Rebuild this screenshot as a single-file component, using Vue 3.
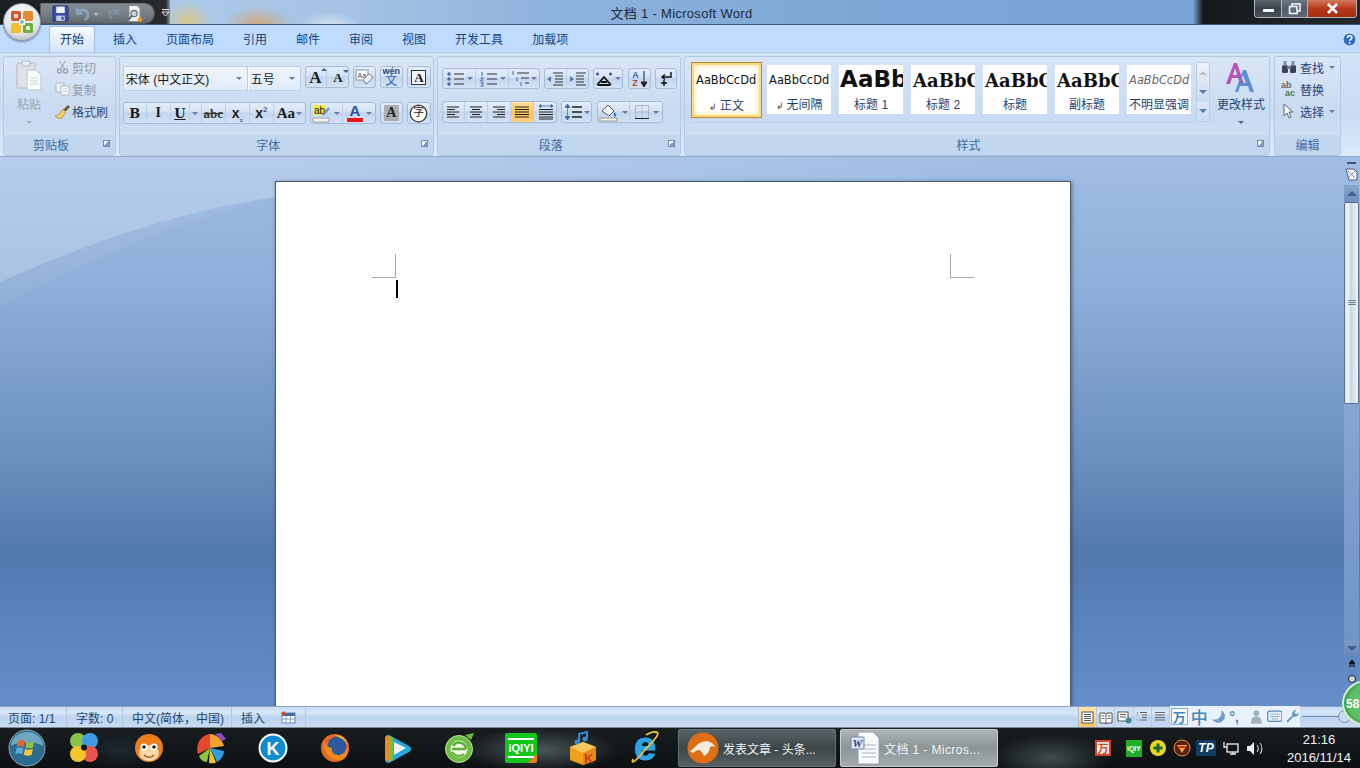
<script setup>
const tabs = ['插入', '页面布局', '引用', '邮件', '审阅', '视图', '开发工具', '加载项']
const alignIcons = [
  { d: 'M2 3h12M2 5.500h8M2 8h12M2 10.500h8M2 13h12', on: false },
  { d: 'M2 3h12M4 5.500h8M2 8h12M4 10.500h8M2 13h12', on: false },
  { d: 'M2 3h12M6 5.500h8M2 8h12M6 10.500h8M2 13h12', on: false },
  { d: 'M1 3h14M1 5.500h14M1 8h14M1 10.500h14M1 13h14', on: true },
  { d: 'M1 5.500h14M1 8h14M1 10.500h14M1 13h14M1 15h14', on: false, arrows: true }
]
const styles = [
  { name: '正文', mark: true, sample: 'AaBbCcDd', cls: 's-normal', active: true },
  { name: '无间隔', mark: true, sample: 'AaBbCcDd', cls: 's-normal' },
  { name: '标题 1', sample: 'AaBb', cls: 's-h1' },
  { name: '标题 2', sample: 'AaBbC', cls: 's-h2' },
  { name: '标题', sample: 'AaBbC', cls: 's-h2' },
  { name: '副标题', sample: 'AaBbC', cls: 's-h2' },
  { name: '不明显强调', sample: 'AaBbCcDd', cls: 's-em' }
]
</script>

<template>
  <div class="screen">
    <header class="titlebar">
      <div class="qat-zone">
        <div class="qat">
          <svg class="q1" width="17" height="17" viewBox="0 0 16 16"><rect x="1" y="1" width="14" height="14" rx="1" fill="#3b4fa8" stroke="#26327a"/><rect x="4" y="1.500" width="8" height="6" fill="#eef2fb"/><rect x="4" y="10" width="8" height="5" fill="#c4cbe0"/><rect x="9" y="11" width="2" height="3" fill="#3b4fa8"/></svg>
          <svg class="q2" width="17" height="17" viewBox="0 0 16 16"><path d="M3 3v5h5M3 8c2-4 8-5 10 0 1 3-1 5-3 6" fill="none" stroke="#8fb0cf" stroke-width="2.400"/></svg>
          <span class="q-caret q3"></span>
          <svg class="q4" width="15" height="17" viewBox="0 0 16 16"><path d="M13 3v5H8M13 8C11 4 5 3 4 8c-.6 3 1 5 3 6" fill="none" stroke="#7f9ab0" stroke-width="2.200"/></svg>
          <svg class="q5" width="18" height="19" viewBox="0 0 18 18"><path d="M3 1h8l3 3v13H3z" fill="#f4f4f2" stroke="#8b8b85"/><circle cx="8" cy="9" r="3.200" fill="#bcd5ea" stroke="#6b6b6b" stroke-width="1.200"/><path d="M5.500 11.500 3 15" stroke="#555" stroke-width="1.600"/><circle cx="14" cy="15" r="2.400" fill="#e69a2c"/></svg>
        </div>
        <svg class="qat-more" width="9" height="10" viewBox="0 0 9 10"><path d="M1 1.500h7" stroke="#e6edf5"/><path d="M1 4h7L4.500 8z" fill="none" stroke="#e6edf5"/></svg>
      </div>
      <div class="title">文档 1 - Microsoft Word</div>
      <div class="win-zone">
        <div class="winbtns">
          <div class="wb min"><span class="minbar"></span></div>
          <div class="wb res"><svg width="13" height="12" viewBox="0 0 13 12"><rect x="4" y="1" width="8" height="7" fill="none" stroke="#f2f6fa" stroke-width="1.600"/><rect x="1.500" y="3.500" width="7.500" height="7" fill="#5b6d80" stroke="#f2f6fa" stroke-width="1.600"/></svg></div>
          <div class="wb close"><svg width="13" height="11" viewBox="0 0 13 11"><path d="M2 1l9 9M11 1l-9 9" stroke="#fff" stroke-width="2.600"/></svg></div>
        </div>
      </div>
    </header>

    <div class="orb" aria-label="Office">
      <svg width="26" height="26" viewBox="0 0 26 26">
        <rect x="2" y="2" width="10" height="10" rx="1.500" fill="#d9562a"/>
        <rect x="14" y="2" width="10" height="10" rx="1.500" fill="#e98a2e"/>
        <rect x="2" y="14" width="10" height="10" rx="1.500" fill="#f2bf2f"/>
        <rect x="14" y="14" width="10" height="10" rx="1.500" fill="#6fae3d"/>
        <path d="M5 5h4v4H5zM17 17h4v4h-4z" fill="#fff" opacity=".75"/>
        <path d="M10 10h6v6h-6z" fill="#fff"/>
        <path d="M11.500 11.500h3v3h-3z" fill="#5fa4cf"/>
      </svg>
    </div>

    <nav class="tabs">
      <div class="tab active">开始</div>
      <div v-for="t in tabs" :key="t" class="tab">{{ t }}</div>
      <svg class="help" width="15" height="15" viewBox="0 0 15 15"><circle cx="7.500" cy="7.500" r="6.500" fill="#2f6fc0" stroke="#dfeaf8"/><path d="M5.300 6c0-3 4.600-3 4.600-.4 0 1.700-2.300 1.700-2.300 3.400" fill="none" stroke="#fff" stroke-width="1.500"/><circle cx="7.600" cy="11" r=".9" fill="#fff"/></svg>
    </nav>

    <section class="ribbon">
      <!-- clipboard -->
      <div class="group g-clip">
        <div class="g-body clip-body">
          <div class="paste">
            <svg width="26" height="32" viewBox="0 0 26 32"><rect x="1" y="3" width="18" height="25" rx="1.500" fill="#dfe3e8" stroke="#b4bcc7"/><rect x="6" y="1" width="8" height="5" rx="1" fill="#eef0f2" stroke="#aeb5bf"/><path d="M11 10h9l5 5v15H11z" fill="#f8f9fa" stroke="#bcc3cc"/><path d="M14 18h8M14 21h8M14 24h8" stroke="#cfd4da"/></svg>
            <span class="paste-t">粘贴</span>
            <span class="caret grey"></span>
          </div>
          <div class="clip-list">
            <div class="clip-row off"><svg width="14" height="14" viewBox="0 0 14 14"><circle cx="4" cy="11" r="2" fill="none" stroke="#9aa3ae" stroke-width="1.400"/><circle cx="10" cy="11" r="2" fill="none" stroke="#9aa3ae" stroke-width="1.400"/><path d="M5 9l5-8M9 9L4 1" stroke="#a9b1bb" stroke-width="1.300"/></svg><span>剪切</span></div>
            <div class="clip-row off"><svg width="15" height="14" viewBox="0 0 15 14"><rect x="1" y="1" width="8" height="9" fill="#eceff2" stroke="#b2bac4"/><rect x="6" y="4" width="8" height="9" fill="#f8f9fa" stroke="#b2bac4"/><path d="M8 7h4M8 9.500h4" stroke="#c3c9d0"/></svg><span>复制</span></div>
            <div class="clip-row"><svg width="17" height="15" viewBox="0 0 17 15"><path d="M9 6l5-5 2 2-5 5z" fill="#6a5a2c"/><path d="M9 5l3 3-4 6c-3 1-6 0-7-2 3 0 5-3 8-7z" fill="#efcf64" stroke="#a88a30" stroke-width=".7"/></svg><span>格式刷</span></div>
          </div>
        </div>
        <div class="g-label lb">剪贴板<i class="launch"></i></div>
      </div>

      <!-- font -->
      <div class="group g-font">
        <div class="g-body font-body">
          <div class="row r-top">
            <div class="combo">
              <div class="cb font-name"><span>宋体 (中文正文)</span><i class="caret"></i></div>
              <div class="cb font-size"><span>五号</span><i class="caret"></i></div>
            </div>
            <div class="bg h22 grow2">
              <div class="bb w22"><b class="glyph ser large">A<sup class="tiny-up"></sup></b></div>
              <div class="bb w22"><b class="glyph ser small">A<sup class="tiny-dn"></sup></b></div>
            </div>
            <div class="bg h22 w23"><svg width="19" height="17" viewBox="0 0 19 17"><rect x="1" y="1" width="12" height="10" fill="#fff" stroke="#8a8f98"/><text x="2.500" y="8.500" font-size="7" fill="#33456a" font-family="Liberation Sans">Aa</text><path d="M8 11l6-6 4 3-6 7z" fill="#f2f4f7" stroke="#7c8797"/><path d="M8 11l3 4" stroke="#7c8797"/></svg></div>
            <div class="bg h22 w23 wen"><span class="wen-top">wén</span><span class="wen-bot">文</span></div>
            <div class="bg h22 w24"><span class="boxa">A</span></div>
          </div>
          <div class="row r-bot">
            <div class="bg h22 w183">
              <div class="bb w23"><b class="glyph ser bold">B</b></div>
              <div class="bb w24"><i class="glyph ser italic">I</i></div>
              <div class="bb w19 und"><b class="glyph ser bold u">U</b></div>
              <div class="bb w12"><i class="caret"></i></div>
              <div class="bb w24"><b class="glyph ser strike">abc</b></div>
              <div class="bb w24"><b class="glyph lib">x<sub>₂</sub></b></div>
              <div class="bb w24"><b class="glyph lib">x<sup>2</sup></b></div>
              <div class="bb last"><b class="glyph ser aa">Aa</b><i class="caret c2"></i></div>
            </div>
            <div class="bg h22 w66 ml4">
              <div class="bb w33"><svg width="19" height="19" viewBox="0 0 19 19"><rect x="1" y="1" width="13" height="10" fill="#f5ee3c"/><text x="2" y="10" font-size="10" font-family="Liberation Sans" fill="#111">ab</text><path d="M11 11l6-7" stroke="#6b8fc5" stroke-width="2.500"/><rect x="1" y="14" width="16" height="4" fill="#f3f3ea" stroke="#9da3ab"/></svg><i class="caret c3"></i></div>
              <div class="bb w33 flat"><span class="font-a"><b>A</b><u></u></span><i class="caret c3"></i></div>
            </div>
            <div class="bg h22 w23 ml4"><span class="shade-a">A</span></div>
            <div class="bg h22 w24 ml4"><svg width="19" height="19" viewBox="0 0 19 19"><circle cx="9.500" cy="9.500" r="8.300" fill="#fff" stroke="#333" stroke-width="1.200"/></svg><span class="zi">字</span></div>
          </div>
        </div>
        <div class="g-label lb">字体<i class="launch"></i></div>
      </div>

      <!-- paragraph -->
      <div class="group g-para">
        <div class="g-body para-body">
          <div class="row p-top">
            <div class="bg p21 w98">
              <div class="bb w33"><svg width="18" height="16" viewBox="0 0 18 16"><path d="M8 3h10M8 8h10M8 13h10" stroke="#333" stroke-width="1.200"/><circle cx="3" cy="3" r="1.700" fill="#4a66a8"/><circle cx="3" cy="8" r="1.700" fill="#4a66a8"/><circle cx="3" cy="13" r="1.700" fill="#4a66a8"/></svg><i class="caret c3"></i></div>
              <div class="bb w33"><svg width="18" height="16" viewBox="0 0 18 16"><path d="M8 3h10M8 8h10M8 13h10" stroke="#333" stroke-width="1.200"/><path d="M3 1v4M1.500 7h3l-3 3h3M1.500 12h3l-1 1.500 1 1.500h-3" fill="none" stroke="#4a66a8"/></svg><i class="caret c3"></i></div>
              <div class="bb last"><svg width="19" height="16" viewBox="0 0 19 16"><path d="M6 2h12M10 7h8M14 12h4" stroke="#333" stroke-width="1.200"/><path d="M2 0v4M6 6v4M10 11v4" stroke="#4a66a8"/></svg><i class="caret c2"></i></div>
            </div>
            <div class="bg p21 w45 ml4">
              <div class="bb w22"><svg width="17" height="16" viewBox="0 0 17 16"><path d="M6 2h10M8 5h8M8 8h8M8 11h8M6 14h10" stroke="#333" stroke-width="1.200"/><path d="M0 8l4-3v6z" fill="#5577b5"/></svg></div>
              <div class="bb w22 flat"><svg width="17" height="16" viewBox="0 0 17 16"><path d="M1 2h10M1 5h8M1 8h8M1 11h8M1 14h10" stroke="#333" stroke-width="1.200" transform="translate(6)"/><path d="M5 8L1 5v6z" fill="#5577b5"/></svg></div>
            </div>
            <div class="bg p21 w30 ml4"><svg width="18" height="14" viewBox="0 0 18 14"><path d="M2 13L9 5l7 8M3 13h12M6 10h6" fill="none" stroke="#111" stroke-width="1.800"/><path d="M1 2l3 0M2.500.5v3M14 2h3M15.500.5v3" stroke="#2b4e96" stroke-width="1.300"/></svg><i class="caret c4"></i></div>
            <div class="bg p21 w23 ml5"><span class="az"><em>A</em><strong>Z</strong></span><svg width="8" height="18" viewBox="0 0 8 18"><path d="M4 1v13M1 12l3 5 3-5z" stroke="#222" fill="#222"/></svg></div>
            <div class="bg p21 w22 ml4"><svg width="14" height="15" viewBox="0 0 14 15"><path d="M12 1v5H4M6 3.500 3 6l3 2.500" fill="none" stroke="#111" stroke-width="1.400"/><path d="M5 9v6M2 12h6" stroke="#111" stroke-width="1.500"/></svg></div>
          </div>
          <div class="row p-bot">
            <div class="bg h22b w115">
              <div v-for="(a, i) in alignIcons" :key="i" class="bb w23" :class="{ on: a.on }">
                <svg width="16" height="16" viewBox="0 0 16 16"><path :d="a.d" stroke="#222" stroke-width="1.100"/><path v-if="a.arrows" d="M1 2h14M1 2l2-1.500v3zM15 2l-2-1.500v3z" stroke="#3a63a8" fill="#3a63a8" stroke-width=".8"/></svg>
              </div>
            </div>
            <div class="bg h22b w31 ml4"><svg width="18" height="18" viewBox="0 0 18 18"><path d="M3.500 2v14M1 4.500 3.500 1 6 4.500zM1 13.500 3.500 17 6 13.500z" fill="#3a63a8" stroke="#3a63a8" stroke-width=".7"/><path d="M8 4h10M8 9h10M8 14h10" stroke="#222" stroke-width="1.300"/></svg><i class="caret c4"></i></div>
            <div class="bg h22b w66 ml5">
              <div class="bb w33"><svg width="20" height="19" viewBox="0 0 20 19"><path d="M3 8l6-6 6 6-5 5z" fill="#f3f5f8" stroke="#555"/><path d="M15 9c2 2 3 3 2 4.500-1 .8-2.300 0-2-2z" fill="#3a7cc0"/><rect x="1" y="15" width="17" height="3" fill="#f3f3e8" stroke="#999"/></svg><i class="caret c3"></i></div>
              <div class="bb w33 flat"><svg width="16" height="16" viewBox="0 0 16 16"><rect x="1.500" y="1.500" width="13" height="13" fill="none" stroke="#8a8f96" stroke-dasharray="1 1"/><path d="M8 1.500v13M1.500 8h13" stroke="#a0a5ab" stroke-dasharray="1 1"/><path d="M1 14.500h14" stroke="#222"/></svg><i class="caret c3"></i></div>
            </div>
          </div>
        </div>
        <div class="g-label lb">段落<i class="launch"></i></div>
      </div>

      <!-- styles -->
      <div class="group g-styles">
        <div class="g-body styles-body">
          <div class="gallery">
            <div v-for="s in styles" :key="s.name" class="st" :class="{ active: s.active }">
              <div class="st-sample" :class="s.cls">{{ s.sample }}</div>
              <div class="st-name"><span v-if="s.mark" class="ret">↲</span>{{ s.name }}</div>
            </div>
          </div>
          <div class="gal-scroll">
            <div class="gs gs1"><i class="up"></i></div>
            <div class="gs"><i class="down"></i></div>
            <div class="gs gs3"><i class="more"></i></div>
          </div>
          <div class="change">
            <svg width="32" height="32" viewBox="0 0 32 32"><path d="M1 22 9 1h3l7 21h-4l-2-6H7l-2 6zM8 13h4l-2-7z" fill="#b653b5"/><path d="M10 30 18 8h3l8 22h-4l-2-6h-8l-2 6zm5-9h6l-3-8z" fill="#5b8ed6"/></svg>
            <span>更改样式</span>
            <i class="caret dark"></i>
          </div>
        </div>
        <div class="g-label lb">样式<i class="launch"></i></div>
      </div>

      <!-- editing -->
      <div class="group g-edit">
        <div class="g-body edit-body">
          <div class="edit-row"><svg width="16" height="14" viewBox="0 0 16 14"><rect x="1" y="5" width="6" height="8" rx="1.500" fill="#38435a"/><rect x="9" y="5" width="6" height="8" rx="1.500" fill="#38435a"/><rect x="2.500" y="1" width="3" height="5" fill="#7b8aa0"/><rect x="10.500" y="1" width="3" height="5" fill="#7b8aa0"/><rect x="6" y="6" width="4" height="3" fill="#6d7a90"/></svg><span>查找</span><i class="caret c5"></i></div>
          <div class="edit-row"><span class="abac"><em>ab</em><strong>ac</strong></span><span>替换</span></div>
          <div class="edit-row"><svg width="16" height="16" viewBox="0 0 16 16"><path d="M3 1v12l3-3 2 5 2-1-2-5h4z" fill="#f5f6f8" stroke="#5b6675"/></svg><span>选择</span><i class="caret c5"></i></div>
        </div>
        <div class="g-label">编辑</div>
      </div>
    </section>

    <main class="docarea">
      <svg class="swoosh" width="1343" height="160" viewBox="0 0 1343 160">
        <defs>
          <linearGradient id="sw" gradientUnits="userSpaceOnUse" x1="275" y1="0" x2="1071" y2="0"><stop offset="0" stop-color="#fff" stop-opacity=".24"/><stop offset="1" stop-color="#fff" stop-opacity="0"/></linearGradient>
        </defs>
        <path d="M0 0H1071V40H275C170 56 80 90 0 125z" fill="url(#sw)"/>
        <path d="M0 125C80 90 170 56 275 40 190 60 90 100 0 150z" fill="#fff" opacity=".06"/>
      </svg>
      <div class="canvas">
        <div class="page">
          <div class="marks"><span class="mark tl"></span><span class="mark tr"></span></div>
          <div class="cursor"></div>
        </div>
      </div>
      <aside class="vscroll">
        <span class="split"></span>
        <svg class="ruler-i" width="13" height="13" viewBox="0 0 13 13"><path d="M1 1h8l3 3v8H4z" fill="#eef2f7" stroke="#555f70"/><path d="M3 3l7 7M10 3l-7 7" stroke="#6d7788" stroke-dasharray="2 1"/></svg>
        <div class="sb-btn first"><i class="up2"></i></div>
        <div class="thumb"><span class="grip"></span></div>
        <div class="track"></div>
        <div class="sb-btn last"><i class="dn2"></i></div>
        <svg class="nav-a" width="8" height="9" viewBox="0 0 8 9"><path d="M4 1 1 5h6zM1 7h6" stroke="#111" fill="#111"/></svg>
        <span class="nav-dot"></span>
      </aside>
    </main>

    <footer class="status">
      <div class="st-cell c1">页面: 1/1</div>
      <div class="st-cell c2">字数: 0</div>
      <div class="st-cell c3">中文(简体，中国)</div>
      <div class="st-cell c4"><span>插入</span><svg width="15" height="13" viewBox="0 0 15 13"><rect x="1" y="2" width="13" height="10" fill="#f7f8fa" stroke="#6f88aa"/><rect x="1" y="2" width="13" height="3" fill="#3e6ea8"/><path d="M5 5v7M9.500 5v7M1 8h13" stroke="#8ea3bf"/><circle cx="2.500" cy="2.500" r="2" fill="#d34a34"/></svg></div>
      <div class="st-fill"></div>
      <div class="views">
        <div class="vw on"><svg width="13" height="13" viewBox="0 0 13 13"><rect x="1" y="1" width="11" height="11" fill="#fff" stroke="#555"/><path d="M3 3.500h7M3 5.500h7M3 7.500h7M3 9.500h7" stroke="#555"/></svg></div>
        <div class="vw"><svg width="14" height="13" viewBox="0 0 14 13"><path d="M1 2h5l1 1 1-1h5v10H8l-1 1-1-1H1z" fill="#fff" stroke="#555"/><path d="M7 3v9M2.500 5h3M2.500 7.500h3M8.500 5h3M8.500 7.500h3" stroke="#666"/></svg></div>
        <div class="vw"><svg width="15" height="13" viewBox="0 0 15 13"><rect x="1" y="1" width="10" height="9" fill="#fff" stroke="#555"/><path d="M3 3.500h6M3 6h6" stroke="#555"/><circle cx="11.500" cy="9.500" r="3" fill="#3f8a94"/></svg></div>
        <div class="vw"><svg width="12" height="12" viewBox="0 0 12 12"><path d="M4 1.500h7M6 4h5M6 6.500h5M4 9h7M1 1.500h1M1 4h1M1 9h1" stroke="#666"/></svg></div>
        <div class="vw"><svg width="12" height="12" viewBox="0 0 12 12"><path d="M1 1.500h10M1 4h10M1 6.500h10M1 9h10" stroke="#666"/></svg></div>
      </div>
      <div class="ime">
        <span class="ime-wan">万</span>
        <span class="ime-zh">中</span>
        <svg width="16" height="16" viewBox="0 0 16 16"><path d="M11 1a7 7 0 1 1-10 9c4 2 10 0 10-9z" fill="#6d9ccb"/></svg>
        <span class="ime-p">°,</span>
        <svg width="15" height="16" viewBox="0 0 15 16"><circle cx="7.500" cy="4" r="3" fill="#9fb0bf"/><path d="M2 15c0-6 2-7.500 5.500-7.500S13 9 13 15z" fill="#9fb0bf"/></svg>
        <svg width="16" height="13" viewBox="0 0 16 13"><rect x=".7" y="1" width="14.600" height="10.500" rx="2" fill="#eaf2fa" stroke="#5a8cb8" stroke-width="1.300"/><path d="M3 4h10M3 6.500h10M5 9h6" stroke="#5a8cb8" stroke-dasharray="1.500 .8"/></svg>
        <svg width="15" height="15" viewBox="0 0 15 15"><path d="M14 3.500a4 4 0 0 1-5.500 4L3 13.500 1.500 12l6-5.500A4 4 0 0 1 11.500 1L9.500 3.500l2 2z" fill="#5f93c2"/></svg>
      </div>
      <div class="zoom"><span class="zline"></span><span class="zminus"></span></div>
    </footer>

    <div class="badge"><span>58</span></div>

    <div class="taskbar">
      <div class="start">
        <svg width="38" height="38" viewBox="0 0 38 38">
          <circle cx="19" cy="19" r="18" fill="#2c6c8e" stroke="#8fa7b2"/>
          <path d="M3 17a16 14 0 0 1 32 0c-8-5-24-5-32 0z" fill="#8cc1d9" opacity=".7"/>
          <path d="M10 12c3-1.500 5-1 7 0l-1.200 6c-2-1-4-1.300-7-.2z" fill="#e6643a"/>
          <path d="M18.500 12.500c2.500 1.200 5 1.300 7.500 0L25 18.500c-2.500 1.300-5 1-7.500 0z" fill="#8fc24a"/>
          <path d="M8.500 19c3-1 5-.8 7 .2l-1.200 6c-2-1-4.200-1.200-7-.2z" fill="#5aa9dc"/>
          <path d="M17 19.800c2.500 1.200 5 1.300 7.800 0l-1 6c-2.800 1.300-5 1-8 0z" fill="#f3c63c"/>
        </svg>
      </div>
      <div class="tb-icons">
        <div class="ti"><svg width="32" height="32" viewBox="0 0 32 32"><circle cx="10" cy="9" r="8" fill="#8bc34a"/><circle cx="22" cy="9" r="8" fill="#3f9ae0"/><circle cx="22" cy="22" r="8" fill="#e9564f"/><circle cx="10" cy="22" r="8" fill="#f5c52c"/><circle cx="16" cy="15.500" r="3" fill="#10161a"/></svg></div>
        <div class="ti t2"><svg width="30" height="32" viewBox="0 0 30 32"><circle cx="15" cy="16" r="14" fill="#ec7d1c"/><ellipse cx="15" cy="21" rx="10" ry="8" fill="#fbd7a8"/><circle cx="10" cy="15" r="3.500" fill="#fff"/><circle cx="20" cy="15" r="3.500" fill="#fff"/><circle cx="10" cy="15" r="1.800" fill="#222"/><circle cx="20" cy="15" r="1.800" fill="#222"/><path d="M10 23c3 3 7 3 10 0" fill="none" stroke="#9a4b12" stroke-width="1.300"/></svg></div>
        <div class="ti"><svg width="32" height="32" viewBox="0 0 32 32"><path d="M15 16 3 22C0 12 6 3 15 2z" fill="#e8462f"/><path d="M15 16 4 24c1 3 4 6 8 6z" fill="#8cc63e"/><path d="M15 16l-1 15c2 .6 5 .4 7-.6z" fill="#f4c42b"/><path d="M15 16l7 14c4-2 7-7 7-11z" fill="#2f9de0"/><path d="M15 16 15 2c6 0 12 5 14 12z" fill="#f3a233"/><path d="M20 2l6-1 5 6-4 2z" fill="#8d4fc0"/></svg></div>
        <div class="ti"><svg width="30" height="30" viewBox="0 0 30 30"><circle cx="15" cy="15" r="13.500" fill="#0e8cd2" stroke="#fff" stroke-width="2"/><text x="15" y="21.500" text-anchor="middle" font-family="Liberation Sans" font-weight="700" font-size="18" fill="#fff">K</text></svg></div>
        <div class="ti"><svg width="30" height="30" viewBox="0 0 30 30"><circle cx="15" cy="15" r="14" fill="#e9681f"/><circle cx="17" cy="13" r="9.500" fill="#2d5a9e"/><path d="M3 8c0 11 7 20 18 19 5-1 8-7 7-14-2 8-6 10-11 9-4-1-6-4-5-7-3 0-6-2-9-7z" fill="#f08a1c"/><path d="M14 2c6 0 12 3 14 10-3-5-7-7-14-10z" fill="#f6bf2c"/></svg></div>
        <div class="ti"><svg width="32" height="32" viewBox="0 0 32 32"><path d="M4 7c0-4 3-5 6-3l18 10c3 2 3 4 0 6L10 30c-3 2-6 1-6-3z" fill="#23a8e0"/><path d="M4 7c0-3 2-4 5-3v25c-3 1-5-.5-5-3z" fill="#f08a24"/><path d="M9 4l3 2v22l-3 2z" fill="#7ac142"/><path d="M13 10l12 6-12 7z" fill="#f1f4f0"/></svg></div>
        <div class="ti"><svg width="30" height="32" viewBox="0 0 30 32"><circle cx="15" cy="17" r="13.500" fill="#6fbe44" stroke="#bfe39f"/><circle cx="15" cy="17" r="8.500" fill="#f1f7e9"/><path d="M8 17h14M22 17a7 7 0 0 0-13-3" fill="none" stroke="#5cae36" stroke-width="2.500"/><path d="M8 20a8 8 0 0 0 12 2" fill="none" stroke="#5cae36" stroke-width="2.200"/><path d="M21 3l9-2-3 7z" fill="#6fbe44"/></svg></div>
        <div class="ti"><div class="iqiyi"><span>iQIYI</span></div></div>
        <div class="ti"><svg width="32" height="34" viewBox="0 0 32 34"><path d="M3 16l13-5 13 5v13l-13 5-13-5z" fill="#efa11e"/><path d="M16 11l13 5-13 6-13-6z" fill="#f7c75b"/><path d="M16 22v12l13-5V16z" fill="#e5881a"/><text x="17" y="32" font-family="Liberation Sans" font-weight="700" font-size="13" fill="#cf3a19">K</text><path d="M12 11V3l8-2v7" fill="none" stroke="#3c89c9" stroke-width="2"/><circle cx="10" cy="11" r="2.500" fill="#3c89c9"/><circle cx="18" cy="8" r="2.500" fill="#3c89c9"/></svg></div>
        <div class="ti"><svg width="34" height="34" viewBox="0 0 34 34"><text x="17" y="29" text-anchor="middle" font-family="Liberation Sans" font-weight="700" font-size="40" fill="#2da4e0" stroke="#2da4e0" stroke-width="1">e</text><path d="M5 28C2 35 10 28 16 20 24 11 34 2 28 1c-3-.5-7 1-10 3" fill="none" stroke="#f0c13a" stroke-width="1.800"/></svg></div>
      </div>
      <div class="task t-a">
        <svg width="32" height="32" viewBox="0 0 32 32"><circle cx="16" cy="16" r="15.500" fill="#e06f14"/><path d="M3 19c5-2 6-7 12-9 5-2 11 0 13 5-2-1-4-1-5 0 0 3-2 7-6 9-1-3-3-4-4-6-3 0-5 1-7 3z" fill="#f5ede2"/></svg>
        <span>发表文章 - 头条...</span>
      </div>
      <div class="task t-b">
        <svg width="30" height="34" viewBox="0 0 30 34"><path d="M8 1h15l6 6v26H8z" fill="#f7f9fb" stroke="#93a2b5"/><path d="M12 14h14M12 18h14M12 22h14M12 26h14" stroke="#aab6c5"/><rect x="1" y="6" width="13" height="12" rx="1" fill="#dbe6f4" stroke="#6d86ad"/><text x="7.500" y="15.500" text-anchor="middle" font-family="Liberation Serif" font-style="italic" font-weight="700" font-size="11" fill="#25408f">W</text></svg>
        <span>文档 1 - Micros...</span>
      </div>
      <div class="tray">
        <div class="ty ty1"><span>万</span></div>
        <div class="ty"><div class="ty-iq">iQIY</div></div>
        <div class="ty"><svg width="18" height="18" viewBox="0 0 18 18"><circle cx="9" cy="9" r="8" fill="#e6d72a"/><path d="M9 4.500v9M4.500 9h9" stroke="#1d6b2a" stroke-width="3"/></svg></div>
        <div class="ty"><svg width="18" height="18" viewBox="0 0 18 18"><circle cx="9" cy="9" r="8" fill="#5c1e12" stroke="#d5963a"/><path d="M4 6h10L9 14z" fill="#e8a52c"/><path d="M6 8h6" stroke="#c92a18" stroke-width="2"/></svg></div>
        <div class="ty"><span class="tp">TP</span></div>
        <div class="ty"><svg width="17" height="17" viewBox="0 0 17 17"><rect x="5" y="4" width="11" height="8" fill="none" stroke="#f1f3f4" stroke-width="1.300"/><path d="M2 2v5h3M8 14h6M11 12v2" stroke="#f1f3f4" stroke-width="1.300"/></svg></div>
        <div class="ty"><svg width="17" height="15" viewBox="0 0 17 15"><path d="M1 5h3l4-4v13l-4-4H1z" fill="#eef1f3"/><path d="M11 4c1.500 2 1.500 5 0 7M14 2c2.500 3 2.500 8 0 11" fill="none" stroke="#c8ced2" stroke-width="1.100"/></svg></div>
        <div class="clock"><div>21:16</div><div>2016/11/14</div></div>
        <div class="showdesk"></div>
      </div>
    </div>
  </div>
</template>

<style>
html, body { margin: 0; background: #10161a; }
</style>

<style scoped>
* { box-sizing: border-box; }
.screen { position: relative; width: 1360px; height: 768px; overflow: hidden; display: flex; flex-direction: column; font-family: "Liberation Sans", "Noto Sans CJK SC", sans-serif; font-size: 12px; color: #20406c; }

/* title */
.titlebar { height: 25px; flex: none; display: flex; border-bottom: 1px solid #3c5677;
  background:
    radial-gradient(ellipse 24px 18px at 188px 20px, #d8c98e 0, transparent 100%),
    radial-gradient(ellipse 34px 18px at 258px 24px, #cfa97f 0, transparent 100%),
    radial-gradient(ellipse 30px 14px at 330px 26px, #d9e4ee 0, transparent 100%),
    linear-gradient(90deg, #aac8e8 170px, #a4c3e4 350px, #8db2dc 560px, #7ba5d6 900px, #7aa4d5 1190px); }
.qat-zone { width: 170px; height: 24px; flex: none; position: relative; padding-left: 40px; background: linear-gradient(90deg, #1b1f22 0, #26282a 155px, #2b2d2e 166px, rgba(40,44,48,0) 172px); }
.qat { width: 115px; height: 21px; margin-top: 3px; border-radius: 0 11px 11px 0 / 0 11px 11px 0; background: linear-gradient(#828a92, #777f86 55%, #5f666c); border: 1px solid #555b60; border-top-color: #6e7479; display: flex; align-items: center; position: relative; }
.q1 { margin-left: 11px; }
.q2 { margin-left: 5px; opacity: .75; }
.q-caret { width: 0; height: 0; border: 3px solid transparent; border-top-color: #a9b9c6; margin: 4px 0 0 2px; }
.q4 { margin-left: 7px; opacity: .7; }
.q5 { margin-left: 5px; }
.qat-more { position: absolute; left: 161px; top: 8px; }
.title { flex: 1; text-align: center; font-size: 13px; line-height: 27px; color: #202a3a; letter-spacing: .3px; }
.win-zone { width: 167px; flex: none; height: 24px; padding-left: 61px; background: linear-gradient(90deg, rgba(20,24,28,0) 0, #16191c 10px, #1b1e21 60px, #24282b); }
.winbtns { display: flex; height: 18px; width: 103px; border: 1px solid #aeb6bd; border-top: 0; border-radius: 0 0 4px 4px; overflow: hidden; }
.wb { height: 100%; display: flex; align-items: center; justify-content: center; border-right: 1px solid #aeb6bd; }
.min { width: 27px; background: linear-gradient(#5c6670, #3a4149 50%, #4a525a); }
.minbar { width: 11px; height: 3px; background: #f5f7f9; margin-top: 4px; }
.res { width: 26px; background: linear-gradient(#6b7986, #4f5a65 50%, #5d6975); }
.close { flex: 1; border: 0; background: linear-gradient(#d47a5e, #b8381a 50%, #a52e14); }
.orb { position: absolute; left: 3px; top: 3px; width: 38px; height: 38px; border-radius: 50%; display: flex; align-items: center; justify-content: center; background: radial-gradient(circle at 50% 30%, #fbfcfd, #dfe5ea 60%, #a4abb3); border: 1px solid #8d96a0; box-shadow: 0 1px 2px rgba(30,40,60,.5); z-index: 3; }

/* tabs */
.tabs { height: 27px; flex: none; background: #bfdbff; display: flex; align-items: flex-end; padding-left: 49px; position: relative; }
.tab { height: 26px; line-height: 28px; padding: 0 14.5px; color: #16467f; white-space: nowrap; }
.tab.active { padding: 0 10px; margin-right: 3.5px; height: 26px; color: #16365f; background: linear-gradient(#fbfdff, #e6f0fc 40%, #d4e4f8); border: 1px solid #a3bcdd; border-bottom: 0; border-radius: 3px 3px 0 0; line-height: 26px; }
.help { position: absolute; left: 1342px; top: 7px; }

/* ribbon */
.ribbon { height: 105px; flex: none; display: flex; gap: 3px; padding: 3px 19px 1px 3px; background: linear-gradient(#d2e3f8, #c9dbf3 60%, #dcebfb); border-top: 1px solid #b3cbe6; border-bottom: 1px solid #91a9c6; }
.group { height: 100px; display: flex; flex-direction: column; border: 1px solid #b2c9e3; border-radius: 3px; background: linear-gradient(#d9e6f6, #c7d9f0 62%, #d6e5f7); }
.g-clip { width: 113px; }
.g-font { width: 316px; }
.g-para { width: 244px; }
.g-styles { width: 586px; }
.g-edit { width: 67px; margin-left: 1px; }
.g-body { flex: 1; min-height: 0; }
.g-label { height: 20px; flex: none; position: relative; text-align: center; line-height: 22px; color: #3f6c9f; background: #c0d7ef; border-radius: 0 0 3px 3px; }
.g-label.lb { padding-right: 17px; }
.launch { position: absolute; right: 5px; top: 5px; width: 7px; height: 7px; border: 1px solid #6f8db0; background: linear-gradient(135deg, #fff 50%, #7e9cc0 50%); }
.caret { display: inline-block; width: 0; height: 0; border: 3px solid transparent; border-top: 3px solid #6a7f9b; border-bottom: 0; flex: none; }
.caret.grey { border-top-color: #a6b0bc; }
.caret.dark { border-top-color: #4f6a8c; }
.c2 { margin-left: 1px; }
.c3 { margin-left: 3px; }
.c4 { margin-left: 2px; }
.c5 { margin-left: 2px; }

.clip-body { display: flex; padding: 3px 0 0 1px; }
.paste { width: 48px; display: flex; flex-direction: column; align-items: center; }
.paste-t { color: #9ba4af; margin-top: 5px; line-height: 16px; }
.paste .caret { margin-top: 8px; }
.clip-list { display: flex; flex-direction: column; margin: -4px 0 0 1px; }
.clip-row { height: 22px; display: flex; align-items: center; gap: 1px; white-space: nowrap; color: #2c4a75; }
.clip-row svg { width: 17px; flex: none; }
.clip-row.off { color: #8e99a7; }

.font-body { padding: 9px 0 0 3px; }
.para-body { padding: 11px 0 0 4px; }
.row { display: flex; gap: 4px; align-items: flex-start; }
.r-bot { margin-top: 11px; gap: 0; }
.p-bot { margin-top: 12px; gap: 0; }
.p-top { gap: 0; }
.combo { display: flex; height: 25px; }
.cb { height: 25px; border: 1px solid #bccfe6; background: linear-gradient(#eef4fc, #e1ebf8); display: flex; align-items: center; justify-content: space-between; padding: 0 5px 0 2px; color: #1a1a1a; font-size: 12px; }
.font-name { width: 125px; }
.font-size { width: 53px; border-left-color: #fff; }
.bg { display: flex; align-items: center; justify-content: center; border: 1px solid #a5bdda; border-radius: 3px; background: linear-gradient(#e3edfa, #d3e2f5 45%, #c3d6ee 50%, #d3e2f4); flex: none; overflow: hidden; position: relative; }
.h22 { height: 22px; }
.h22b { height: 22px; }
.p21 { height: 21px; }
.bb { height: 100%; display: flex; align-items: center; justify-content: center; border-right: 1px solid #bccfe5; flex: none; }
.bb.flat, .bb.last, .bb:last-child { border-right: 0; }
.bb.last { flex: 1; }
.bb.on { background: linear-gradient(#ffe39f, #ffc25e 50%, #ffd27c); }
.w12 { width: 12px; } .w19 { width: 19px; } .w22 { width: 22px; } .w23 { width: 23px; } .w24 { width: 24px; } .w30 { width: 30px; } .w31 { width: 31px; } .w33 { width: 33px; } .w45 { width: 45px; } .w66 { width: 66px; } .w98 { width: 98px; } .w115 { width: 115px; } .w183 { width: 183px; }
.ml4 { margin-left: 4px; } .ml5 { margin-left: 5px; }
.grow2 { width: 44px; }
.glyph { color: #1c1c1c; font-style: normal; line-height: 1; }
.ser { font-family: "Liberation Serif", serif; }
.lib { font-family: "Liberation Sans", sans-serif; font-size: 14px; }
.lib sub, .lib sup { font-size: 8px; color: #4a5f7a; line-height: 0; }
.large { font-size: 17px; position: relative; }
.small { font-size: 13px; position: relative; }
.tiny-up, .tiny-dn { position: absolute; right: -6px; top: -1px; border: 3px solid transparent; }
.tiny-up { border-bottom: 3px solid #3a5f8c; border-top: 0; }
.tiny-dn { border-top: 3px solid #3a5f8c; border-bottom: 0; }
.bold { font-family: "DejaVu Serif", serif; font-size: 13px; }
.italic { font-size: 14px; font-weight: 700; }
.u { text-decoration: underline; }
.strike { font-size: 13px; text-decoration: line-through; font-weight: 700; color: #333; }
.aa { font-size: 15px; }
.wen { flex-direction: column; line-height: 1; }
.wen-top { font-size: 9px; font-weight: 700; color: #28497d; line-height: 8px; }
.wen-bot { font-size: 12px; color: #2f5fc0; line-height: 12px; }
.boxa { width: 15px; height: 15px; border: 1px solid #333; font: 700 13px/14px "Liberation Serif", serif; color: #111; text-align: center; background: #f1f5fb; }
.font-a { display: inline-flex; flex-direction: column; align-items: center; }
.font-a b { font: 700 15px/12px "Liberation Sans", sans-serif; color: #2d4f9e; }
.font-a u { width: 16px; height: 4px; background: #e8141c; display: block; margin-top: 1px; }
.shade-a { width: 15px; height: 16px; background: #a9aeb3; color: #222; font: 700 14px/16px "Liberation Serif", serif; text-align: center; }
.zi { position: absolute; left: 0; right: 0; top: 2px; text-align: center; color: #222; font-size: 11px; line-height: 15px; }
.az { display: inline-flex; flex-direction: column; font: 700 9px/8px "Liberation Sans", sans-serif; margin-right: 1px; }
.az em { font-style: normal; color: #3b67b0; }
.az strong { color: #b8413b; }

.styles-body { display: flex; padding: 6px 0 0 6px; }
.gallery { display: flex; width: 504px; height: 60px; gap: 4px; border-bottom: 1px solid #bed0e8; background: linear-gradient(#d4e3f6, #c8daf2); }
.st { width: 64px; height: 49px; margin-top: 2px; margin-left: 4px; background: #fff; flex: none; overflow: hidden; text-align: center; }
.st:nth-child(2) { margin-left: 1px; }
.st.active { width: 71px; height: 56px; margin: -1px 0 0; padding-top: 2px; border: 1px solid #b98a3a; box-shadow: inset 0 0 0 2px #ffd877, inset 0 0 5px 3px #ffe9b0; }
.st-sample { height: 31px; line-height: 30px; white-space: nowrap; overflow: hidden; color: #111; padding-left: 2px; text-align: left; }
.st.active .st-sample { padding-left: 4px; height: 32px; }
.s-normal { font: 11.4px/30px "DejaVu Sans", sans-serif; }
.s-h1 { font: 700 23px/28px "DejaVu Sans", sans-serif; padding-left: 1px; }
.s-h2 { font: 700 18px/31px "DejaVu Serif", serif; }
.s-em { font: italic 11.4px/30px "DejaVu Sans", sans-serif; color: #666; }
.st-name { height: 18px; line-height: 18px; color: #1e3f74; white-space: nowrap; font-size: 12px; }
.ret { font-size: 9px; margin-right: 3px; color: #444; }
.gal-scroll { width: 14px; margin-left: 1px; height: 60px; border: 1px solid #b9cde6; border-radius: 2px; display: flex; flex-direction: column; margin-top: -1px; }
.gs { flex: 1; display: flex; align-items: center; justify-content: center; background: linear-gradient(#dbe8f8, #c8dbf3); }
.gs1 { background: linear-gradient(#f0f4f9, #dfe6ef); }
.gs i { width: 0; height: 0; border: 4px solid transparent; }
.up { border-bottom: 4px solid #b6c3d1 !important; border-top: 0 !important; }
.down { border-top: 4px solid #5c7da4 !important; border-bottom: 0 !important; }
.more { border-top: 4px solid #5c7da4 !important; border-bottom: 0 !important; }
.change { width: 56px; display: flex; flex-direction: column; align-items: center; color: #21467c; white-space: nowrap; margin: -1px 0 0 3px; }
.change span { margin-top: 3px; line-height: 16px; }
.change .caret { margin-top: 8px; }
.edit-body { padding: 0 0 0 6px; }
.edit-row { height: 22px; display: flex; align-items: center; gap: 3px; color: #1f4379; white-space: nowrap; }
.edit-row:first-child { margin-top: -1px; }
.edit-row svg { flex: none; }
.abac { display: inline-flex; flex-direction: column; width: 16px; font: 700 9px/8px "Liberation Sans", sans-serif; }
.abac em { font-style: normal; color: #666; }
.abac strong { color: #3d7d4d; padding-left: 4px; }

/* doc */
.docarea { flex: 1; min-height: 0; display: flex; position: relative; overflow: hidden; background: linear-gradient(#9fbde6 0, #8eafd9 130px, #7fa2cf 200px, #6b8fbf 300px, #5279ae 395px, #658fcb 550px); }
.swoosh { position: absolute; left: 0; top: 0; }
.canvas { width: 1343px; flex: none; position: relative; padding: 24px 0 0 275px; }
.page { width: 796px; height: 560px; background: #fff; border: 1px solid #4d5b6b; box-shadow: 1px 1px 4px rgba(40,60,90,.6); padding: 72px 96px; }
.marks { display: flex; justify-content: space-between; }
.mark { width: 24px; height: 24px; border: 0 solid #a8a8a8; }
.tl { border-right-width: 1px; border-bottom-width: 1px; }
.tr { border-left-width: 1px; border-bottom-width: 1px; }
.cursor { width: 2px; height: 18px; background: #000; margin: 2px 0 0 24px; }
.vscroll { width: 17px; flex: none; display: flex; flex-direction: column; align-items: center; position: relative; }
.split { width: 9px; height: 2px; background: #3f587c; margin-top: 5px; flex: none; }
.ruler-i { margin-top: 4px; flex: none; }
.sb-btn { width: 15px; height: 16px; display: flex; align-items: center; justify-content: center; background: linear-gradient(#89a7cc, #6e90bc); flex: none; }
.sb-btn.first { margin-top: 4px; height: 17px; }
.up2 { border: 5px solid transparent; border-bottom: 5px solid #3f5f88; border-top: 0; }
.dn2 { border: 5px solid transparent; border-top: 5px solid #3f5f88; border-bottom: 0; }
.thumb { width: 15px; height: 202px; flex: none; background: linear-gradient(90deg, #dfe7f2, #f0f4fa 25%, #c9d5e5 45%, #dbe3ee 70%, #f2f5fa); border: 1px solid #5a6f8c; border-radius: 2px; display: flex; align-items: center; justify-content: center; }
.grip { width: 8px; height: 6px; background: repeating-linear-gradient(#6c7f98 0, #6c7f98 1px, transparent 1px, transparent 2px); }
.track { width: 15px; height: 236px; flex: none; background: linear-gradient(#86a6d2, #6f94c6); }
.sb-btn.last { height: 16px; background: linear-gradient(#7b9ac4, #668abb); }
.nav-a { margin-top: 3px; flex: none; }
.nav-dot { width: 8px; height: 8px; border-radius: 50%; border: 1px solid #222; background: #cfd4dc; margin-top: 7px; flex: none; }
.badge { position: absolute; left: 1342px; top: 680px; width: 50px; height: 46px; border-radius: 50%; background: radial-gradient(circle at 50% 50%, #63c16b 0, #5dbd69 58%, #35a53e 72%); border: 2px solid #d2ecd3; z-index: 2; color: #fff; font: 700 12px/44px "Liberation Sans", sans-serif; padding-left: 2px; }

/* status */
.status { height: 21px; flex: none; display: flex; align-items: stretch; position: relative; background: linear-gradient(#c9dcf6, #d7e5f8 30%, #bcd2ef 55%, #cadcf3); border-top: 1px solid #8ea3bf; color: #24466f; font-size: 12px; }
.st-cell { display: flex; align-items: center; padding-left: 8px; border-right: 1px solid #b4c8e1; white-space: nowrap; }
.c1 { width: 67px; }
.st-cell.c2 { width: 56px; padding-left: 9px; margin: 0; }
.st-cell.c3 { width: 109px; padding-left: 9px; margin: 0; }
.st-cell.c4 { width: 74px; padding-left: 9px; gap: 16px; margin: 0; }
.st-fill { width: 773px; flex: none; border-right: 1px solid #a6bcd8; }
.views { width: 91px; flex: none; display: flex; }
.vw { flex: 1; display: flex; align-items: center; justify-content: center; border-right: 1px solid #b7cae2; }
.vw.on { background: linear-gradient(#ffe6a6, #ffc764); }
.ime { width: 130px; flex: none; height: 21px; margin-top: -1px; background: #e9f2fc; display: flex; align-items: center; gap: 3px; }
.ime-wan { width: 17px; height: 17px; margin-left: 1px; border: 1px solid #7eaed8; background: #f8fbff; color: #3f86bf; font: 700 13px/15px "Noto Sans CJK SC", sans-serif; text-align: center; }
.ime-zh { color: #4a85b8; font: 500 17px/18px "Noto Sans CJK SC", sans-serif; }
.ime-p { color: #4a85b8; font: 700 14px/14px "Liberation Sans", sans-serif; width: 17px; }
.zoom { flex: 1; position: relative; }
.zline { position: absolute; left: 2px; right: 14px; top: 9px; height: 1px; background: #6e8cb0; }
.zminus { position: absolute; left: 38px; top: 3px; width: 13px; height: 13px; border-radius: 50%; border: 1px solid #768cab; background: #c9d9ec; }

/* taskbar */
.taskbar { height: 41px; flex: none; display: flex; align-items: center; border-top: 1px solid #7e8a94; color: #eef2f4; background:
    radial-gradient(ellipse 60px 24px at 1050px 30px, #3f4b4a 0, transparent 100%),
    radial-gradient(ellipse 80px 22px at 540px 22px, #4a5658 0, transparent 100%),
    radial-gradient(ellipse 40px 20px at 120px 22px, #1d2830 0, transparent 100%),
    linear-gradient(#181d20, #0c1013); }
.start { width: 53px; flex: none; padding-left: 8px; display: flex; align-items: center; }
.tb-icons { display: flex; width: 623px; flex: none; }
.ti { width: 62px; height: 38px; flex: none; display: flex; align-items: center; justify-content: center; }
.t2 { margin-left: 3px; }
.iqiyi { width: 32px; height: 30px; background: linear-gradient(135deg, #13c71a 85%, #ed7d23 85%); border-radius: 2px; display: flex; align-items: center; justify-content: center; }
.iqiyi span { color: #fff; font: 700 11px/16px "Liberation Sans", sans-serif; border: 2px solid #fff; border-left-width: 0; border-right-width: 0; }
.task { height: 38px; flex: none; width: 158px; margin-left: 2px; display: flex; align-items: center; gap: 4px; padding-left: 8px; border: 1px solid #66727a; border-radius: 2px; background: linear-gradient(#596468, #3c4649 50%, #566064); font-size: 12px; color: #f1f4f5; white-space: nowrap; overflow: hidden; }
.t-b { margin-left: 4px; padding-left: 9px; background: linear-gradient(#aeb5b8, #8b9497 50%, #a2aaad); border-color: #c6ccd0; letter-spacing: .4px; }
.tray { flex: 1; display: flex; align-items: center; height: 100%; padding-left: 93px; }
.ty { width: 24px; height: 24px; flex: none; display: flex; align-items: center; justify-content: center; }
.ty1 { margin-right: 7px; }
.ty1 span { width: 16px; height: 16px; background: #fbeee6; border: 2px solid #d9402a; color: #d9402a; font: 700 11px/12px "Noto Sans CJK SC", sans-serif; text-align: center; }
.ty-iq { width: 16px; height: 17px; background: #1fae28; color: #fff; font: 700 7px/17px "Liberation Sans", sans-serif; text-align: center; overflow: hidden; }
.tp { color: #fff; font: italic 700 12px/16px "Liberation Sans", sans-serif; background: #103e66; padding: 0 2px; border-radius: 2px; }
.clock { width: 80px; margin-left: 13px; text-align: center; font-size: 13px; line-height: 18px; padding-top: 1px; color: #f2f4f5; flex: none; white-space: nowrap; }
.showdesk { width: 14px; height: 38px; margin-left: 5px; background: linear-gradient(90deg, #2a2f32, #55595c); border: 1px solid #6a7075; flex: none; }
</style>
